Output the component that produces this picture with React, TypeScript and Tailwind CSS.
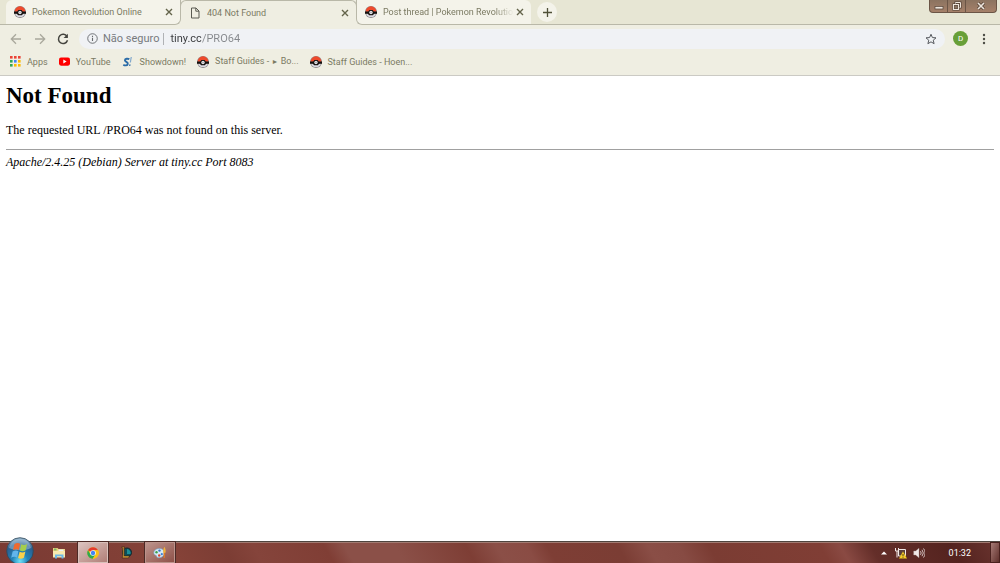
import React from "react"
import clsx from "clsx"

type IconProps = { className?: string }

const Pokeball = ({ className }: IconProps) => (
  <svg viewBox="0 0 24 24" className={clsx("shrink-0", className)}>
    <circle cx="12" cy="12" r="12" fill="#8f8b8e" />
    <path d="M1.200 11.500a10.800 10.800 0 0 1 21.600 0z" fill="#ee4a2c" />
    <path d="M2 15a10.300 9.500 0 0 0 20 0z" fill="#dcdbe2" />
    <path d="M0 10.800h6.500L9 8h6l2.500 2.800H24v4.700h-5.500l-3 3h-7l-3-3H0z" fill="#15110f" />
    <circle cx="12" cy="13" r="3.400" fill="#e6e6ea" />
    <circle cx="12" cy="13" r="1.500" fill="#a3a3aa" />
  </svg>
)

const PageIcon = ({ className }: IconProps) => (
  <svg viewBox="0 0 12 12" fill="none" stroke="#5a5a52" className={clsx("shrink-0", className)}>
    <path d="M2.500 1h4.500l3 3v7H2.500zM6.800 1v3.200H10" />
  </svg>
)

const CloseIcon = () => (
  <svg viewBox="0 0 8 8" className="h-2 w-2" stroke="#63634a" strokeWidth="1.400">
    <path d="m1 1 6 6M7 1 1 7" />
  </svg>
)

const AppsIcon = () => (
  <svg viewBox="0 0 11 11" className="h-[11px] w-[11px] shrink-0">
    {[
      ["#ea4335", "#ea4335", "#ea4335"],
      ["#34a853", "#4285f4", "#fbbc04"],
      ["#34a853", "#fbbc04", "#fbbc04"],
    ].map((row, y) =>
      row.map((fill, x) => (
        <rect key={`${x}-${y}`} x={x * 4} y={y * 4} width="2.600" height="2.600" fill={fill} />
      ))
    )}
  </svg>
)

const YouTubeIcon = () => (
  <svg viewBox="0 0 12 9" className="h-[9px] w-[11px] shrink-0">
    <rect width="12" height="9" rx="2.200" fill="#f00" />
    <path d="m4.700 2.400 3.600 2.100-3.600 2.100z" fill="#fff" />
  </svg>
)

const ShowdownIcon = () => (
  <svg viewBox="0 0 12 12" className="h-3 w-3 shrink-0" fill="none">
    <path d="M7.300 3.300C6 2.300 3 2.500 2.900 4.300c0 1.700 3.200 1.500 2.900 3.500C5.500 9.700 3 9.800 1.300 8.700" stroke="#2b6ca8" strokeWidth="1.900" />
    <path d="M9.300 1 8.300 6.500" stroke="#7fa6cc" strokeWidth="1.200" />
    <path d="m8 8.300-.3 1.700" stroke="#2b6ca8" strokeWidth="1.200" />
  </svg>
)

const WindowsOrb = () => (
  <svg viewBox="0 0 28 28" className="h-7 w-7">
    <defs>
      <radialGradient id="orb" cx="50%" cy="88%" r="85%">
        <stop offset="0" stopColor="#6fe0f6" />
        <stop offset=".35" stopColor="#2283b8" />
        <stop offset=".75" stopColor="#2b5e8f" />
        <stop offset="1" stopColor="#8fb0c9" />
      </radialGradient>
    </defs>
    <circle cx="14" cy="14" r="13.300" fill="url(#orb)" stroke="#2e4759" strokeWidth=".8" />
    <path d="M3 11C5 4 9 2 14 2s9 2 11 9c-6 3-15 3-22 0z" fill="#b9d3e2" opacity=".45" />
    <path d="M8.500 7c2-1.300 4-1.300 5.700-.3L12.800 13c-1.700-1-3.900-1-5.900.2z" fill="#f06a30" />
    <path d="M15.200 7.200c1.700.9 3.900 1 6-.2l-1.500 6.300c-1.900 1.200-4 1.200-5.800.2z" fill="#a5ce4c" />
    <path d="M6.600 14.400c2-1.200 4.100-1.200 5.800-.2L11 20.500c-1.700-1-3.800-1-5.800.2z" fill="#62b5ec" />
    <path d="M13.600 14.700c1.800 1 3.900 1 5.800-.1l-1.500 6.200c-1.900 1.200-4 1.200-5.800.2z" fill="#fbd04a" />
  </svg>
)

const FolderIcon = () => (
  <svg viewBox="0 0 14 12" className="h-3 w-3.5">
    <path d="M1 1h4.500l1 1H13v8H1z" fill="#ecd27c" />
    <path d="M2 1.500h2.500v2H2z" fill="#7fb96a" />
    <path d="M6.500 2.500h5v2h-5z" fill="#e9f3f8" />
    <path d="M1 4h12v6.500H1z" fill="#f8eab0" />
    <path d="M3 11.500V7.500h8.500v4h-2V9.200H5v2.300z" fill="#6db9e6" />
  </svg>
)

const ChromeIcon = () => (
  <svg viewBox="0 0 24 24" className="h-3 w-3">
    <circle cx="12" cy="12" r="11.500" fill="#fbc116" />
    <path d="M12 12 2 6.300A11.500 11.500 0 0 1 22 6.300H12z" fill="#e33b2e" />
    <path d="M2 6.300A11.500 11.500 0 0 0 11.500 23.500L17 14.900 12 12 7 14.900z" fill="#2da94f" />
    <path d="M12 6.300h10a11.500 11.500 0 0 1-10.500 17.200l5.500-8.600z" fill="#fbc116" />
    <circle cx="12" cy="12" r="5.600" fill="#fff" />
    <circle cx="12" cy="12" r="4.400" fill="#4285f4" />
  </svg>
)

const LeagueIcon = () => (
  <svg viewBox="0 0 12 13" className="h-[13px] w-3">
    <circle cx="7" cy="6.500" r="4.500" fill="#0e4f58" stroke="#12262c" />
    <path d="M7 3a4 4 0 0 1 3.500 5H7z" fill="#1c8f98" />
    <path d="M1.500 1h3.300l-.6 1.200v7.700h5.300l-1 2H2l.7-1.200V2.200z" fill="#d79d3c" stroke="#33220f" strokeWidth=".6" />
  </svg>
)

const PaintIcon = () => (
  <svg viewBox="0 0 14 13" className="h-[13px] w-3.5">
    <path d="M6 2.500C2.800 2.600.6 4.700.8 7.300c.2 2 2 1.600 2.600 2.400.7 1-.1 2 2.400 2 3.200 0 5.700-2.100 5.600-5C11.300 4 9 2.400 6 2.500z" fill="#d7e9f5" stroke="#6f9dc4" strokeWidth=".6" />
    <circle cx="3.500" cy="6.300" r="1.200" fill="#3fa34a" />
    <circle cx="6.500" cy="4.600" r="1.200" fill="#3671c8" />
    <circle cx="6.200" cy="9.500" r="1.200" fill="#d94432" />
    <circle cx="8.800" cy="8.200" r="1.100" fill="#3c82d4" />
    <path d="M10.500 6.500h1.600L11.900 12h-1.200z" fill="#e07b25" />
    <path d="M10.200 6.700C9.800 4 10.700 2.300 11.500.7c.8 1.600 1.500 3.500 1 6z" fill="#f0b33e" />
  </svg>
)

type Tab = {
  title: string
  icon: React.ReactNode
  wrap?: string
  shape: string
  fade?: boolean
}

const tabs: Tab[] = [
  {
    title: "Pokemon Revolution Online",
    icon: <Pokeball className="h-3 w-3" />,
    wrap: "bg-linear-to-r from-[#e7e6d4] from-50% to-[#efeee2] to-50%",
    shape: "rounded-tl-md rounded-br-md border-b border-r border-[#b9b8a8] bg-[#f4f3ea]",
  },
  {
    title: "404 Not Found",
    icon: <PageIcon className="h-3 w-3" />,
    shape: "bg-[#efeee2]",
  },
  {
    title: "Post thread | Pokemon Revolutio",
    icon: <Pokeball className="h-3 w-3" />,
    wrap: "bg-linear-to-r from-[#efeee2] from-50% to-[#e7e6d4] to-50%",
    shape: "rounded-tr-md rounded-bl-md border-b border-l border-[#b9b8a8] bg-[#f4f3ea]",
    fade: true,
  },
]

const TabStrip = () => (
  <div className="flex h-[25px] items-stretch bg-[#e7e6d4]">
    <div className="w-1.5 border-b border-[#b9b8a8]" />
    {tabs.map((tab, index) => (
      <div key={tab.title} className={clsx("relative w-[175px]", tab.wrap)}>
        <div className={clsx("flex h-full items-center pl-2 pr-[7px]", tab.shape)}>
          {index === 1 && (
            <span className="pointer-events-none absolute -left-px -right-px top-0 h-3 rounded-t-md border-x border-t border-[#b9b8a8]" />
          )}
          <button type="button" className="flex min-w-0 flex-1 items-center gap-1.5 text-left">
            {tab.icon}
            <span
              className={clsx(
                "flex-1 overflow-hidden whitespace-nowrap",
                tab.fade && "mask-r-from-85%"
              )}
            >
              {tab.title}
            </span>
          </button>
          <button type="button" aria-label="Fechar" className="ml-0.5 shrink-0">
            <CloseIcon />
          </button>
        </div>
      </div>
    ))}
    <div className="flex flex-1 items-start justify-between border-b border-[#b9b8a8] pl-1.5 pr-[3px]">
      <button
        type="button"
        aria-label="Nova guia"
        className="mt-0.5 flex h-5 w-5 items-center justify-center rounded-full bg-[#f4f3ea]"
      >
        <svg viewBox="0 0 9 9" className="h-[9px] w-[9px]" stroke="#4f5038" strokeWidth="1.300">
          <path d="M4.500 0v9M0 4.500h9" />
        </svg>
      </button>
      <div className="flex h-[13px] divide-x divide-[#6b5546] overflow-hidden rounded-b-sm border border-t-0 border-[#6b5546] bg-linear-to-b from-[#8b7360] to-[#a58069]">
        <button type="button" aria-label="Minimizar" className="flex w-[18px] items-center justify-center">
          <svg viewBox="0 0 10 10" className="h-2.5 w-2.5">
            <rect x="1" y="5.500" width="8" height="2.500" fill="#eee5dc" stroke="#554539" strokeWidth=".7" />
          </svg>
        </button>
        <button type="button" aria-label="Restaurar" className="flex w-[18px] items-center justify-center">
          <svg viewBox="0 0 10 10" className="h-2.5 w-2.5" fill="none">
            <path d="M3.500 1.500h5v5h-5z" stroke="#4d3d32" strokeWidth="2" />
            <path d="M3.500 1.500h5v5h-5z" stroke="#eee5dc" />
            <path d="M1.500 3.500h5v5h-5z" fill="#8b7360" stroke="#4d3d32" strokeWidth="2.200" />
            <path d="M1.500 3.500h5v5h-5z" stroke="#eee5dc" strokeWidth="1.200" />
          </svg>
        </button>
        <button type="button" aria-label="Fechar janela" className="flex w-[30px] items-center justify-center">
          <svg viewBox="0 0 10 10" className="h-2.5 w-2.5">
            <path d="m2 2 6 6M8 2 2 8" stroke="#4d3d32" strokeWidth="3" />
            <path d="m2 2 6 6M8 2 2 8" stroke="#eee5dc" strokeWidth="1.700" />
          </svg>
        </button>
      </div>
    </div>
  </div>
)

const Toolbar = () => (
  <div className="flex h-[27px] items-center pl-2.5 pr-2.5">
    <button type="button" aria-label="Voltar" className="mr-3">
      <svg viewBox="0 0 12 12" className="h-3 w-3" fill="none" stroke="#a9a89c" strokeWidth="1.300">
        <path d="M11 6H1.500M6 1.300 1.300 6 6 10.700" />
      </svg>
    </button>
    <button type="button" aria-label="Avançar" className="mr-[11px]">
      <svg viewBox="0 0 12 12" className="h-3 w-3" fill="none" stroke="#a9a89c" strokeWidth="1.300">
        <path d="M1 6h9.500M6 1.300 10.700 6 6 10.700" />
      </svg>
    </button>
    <button type="button" aria-label="Recarregar" className="mr-2.5">
      <svg viewBox="0 0 12 12" className="h-3 w-3" fill="none" stroke="#45453f" strokeWidth="1.500">
        <path d="M10 3.500A4.600 4.600 0 1 0 10.500 7.200" />
        <path d="M10.900.8v4.300H6.600z" fill="#45453f" stroke="none" />
      </svg>
    </button>
    <div className="flex h-5 flex-1 items-center rounded-full bg-[#f0f2f5] pl-2 pr-2 text-[11px] leading-4">
      <svg viewBox="0 0 12 12" className="mr-[5px] h-[11px] w-[11px]" fill="none" stroke="#66696d">
        <circle cx="6" cy="6" r="5.200" />
        <path d="M6 5.300v3.500M6 3v1.300" strokeWidth="1.200" />
      </svg>
      <span className="text-[#777a7e]">Não seguro</span>
      <span className="ml-1 mr-1.5 h-3 w-px bg-[#b0b2b5]" />
      <input
        aria-label="Endereço"
        defaultValue="tiny.cc/PRO64"
        className="min-w-0 flex-1 bg-linear-[90deg,#36383b_31px,#85888c_31px] bg-clip-text text-transparent outline-0"
      />
      <button type="button" aria-label="Favoritar">
        <svg viewBox="0 0 24 24" className="h-3 w-3" fill="none" stroke="#56595e" strokeWidth="2">
          <path d="m12 2.500 2.800 6.600 7.200.6-5.500 4.700 1.700 7-6.200-3.700-6.200 3.700 1.700-7L2 9.700l7.200-.6z" />
        </svg>
      </button>
    </div>
    <button
      type="button"
      className="ml-2 flex h-[15px] w-[15px] items-center justify-center rounded-full bg-[#689f38] text-[8px] text-white"
    >
      D
    </button>
    <button type="button" aria-label="Menu" className="ml-2.5">
      <svg viewBox="0 0 12 12" className="h-3 w-3" fill="#4c4c44">
        <circle cx="6" cy="2" r="1.200" />
        <circle cx="6" cy="6" r="1.200" />
        <circle cx="6" cy="10" r="1.200" />
      </svg>
    </button>
  </div>
)

const bookmarks = [
  { id: "apps", label: "Apps", icon: <AppsIcon /> },
  { id: "youtube", label: "YouTube", icon: <YouTubeIcon /> },
  { id: "showdown", label: "Showdown!", icon: <ShowdownIcon /> },
  {
    id: "staff-bo",
    label: (
      <span>
        Staff Guides - <span className="text-[7px]">►</span> Bo...
      </span>
    ),
    icon: <Pokeball className="h-3 w-3" />,
  },
  { id: "staff-hoen", label: "Staff Guides - Hoen...", icon: <Pokeball className="h-3 w-3" /> },
]

const Bookmarks = () => (
  <nav className="flex h-6 items-center gap-[11px] border-b border-[#cbcac4] pb-1 pl-2.5">
    {bookmarks.map((bookmark) => (
      <a key={bookmark.id} href="#" className="flex items-center gap-1.5 whitespace-nowrap">
        {bookmark.icon}
        {bookmark.label}
      </a>
    ))}
  </nav>
)

const ErrorPage = () => (
  <main className="flex-1 px-1.5 pt-1.5 font-['Liberation_Serif',serif] text-[12px] leading-[14px] text-black">
    <h1 className="mb-[13px] text-[23px] font-bold leading-7">Not Found</h1>
    <p>The requested URL /PRO64 was not found on this server.</p>
    <hr className="mb-[5px] mt-3 border-[#a0a0a0]" />
    <address className="italic">Apache/2.4.25 (Debian) Server at tiny.cc Port 8083</address>
  </main>
)

const activeTask =
  "border border-[#d9c0ba] bg-linear-to-br from-[#dcc3bf] to-[#b07f78] outline outline-[#4c2a26]"

const Taskbar = () => (
  <footer className="flex h-[22px] items-stretch border-t border-[#4f453f] bg-linear-[60deg,#7a3a33_0%,#854238_18%,#7c3d34_23%,#85443b_26%,#803e35_33%,#8b5048_35%,#8b5048_40%,#7e3e35_47%,#8b4f47_50%,#8a4c44_53%,#7e3e35_55%,#7b3d34_62%,#8a4e46_65%,#874b43_68%,#7b3c33_71%,#803e35_82%,#8a4a43_84%,#642e29_87%,#54231f_95%,#6b3530_100%] shadow-[inset_0_1px_0_#a27b72]">
    <button type="button" aria-label="Iniciar" className="-mt-[5px] ml-1.5 h-7 w-7">
      <WindowsOrb />
    </button>
    <button type="button" aria-label="Explorer" className="ml-[9px] flex w-8 items-center justify-center">
      <FolderIcon />
    </button>
    <button
      type="button"
      aria-label="Chrome"
      className={clsx("ml-[3px] flex w-[30px] items-center justify-center", activeTask)}
    >
      <ChromeIcon />
    </button>
    <button type="button" aria-label="League of Legends" className="ml-0.5 flex w-8 items-center justify-center">
      <LeagueIcon />
    </button>
    <button
      type="button"
      aria-label="Paint"
      className="ml-[3px] flex w-[30px] items-center justify-center border border-[#bb938b] bg-linear-to-br from-[#bd948d] to-[#8e5149] outline outline-[#4c2a26]"
    >
      <PaintIcon />
    </button>
    <div className="ml-auto flex items-center">
      <button type="button" aria-label="Mostrar ícones ocultos" className="mr-2">
        <svg viewBox="0 0 6 4" className="h-1 w-1.5" fill="#fff">
          <path d="m3 .5 3 3H0z" />
        </svg>
      </button>
      <svg viewBox="0 0 12 12" className="mr-1.5 h-3 w-3" fill="none">
        <path d="M.5 1v3h3V1M2 4v6.500" stroke="#f1e9e7" />
        <path d="M3.500 2.500h7v6.500h-7z" fill="#59403d" stroke="#f1e9e7" />
        <path d="m8 4.500 4 7H4z" fill="#f7cf2c" stroke="#9a7414" strokeWidth=".3" />
        <path d="M8 7v2.300m0 .6v.8" stroke="#3c2c0c" strokeWidth=".9" />
      </svg>
      <svg viewBox="0 0 12 12" className="h-3 w-3" fill="none" stroke="#f1e9e7">
        <path d="M.7 4h2L6 1.200v9.600L2.700 8h-2z" fill="#f1e9e7" stroke="#a79995" strokeWidth=".4" />
        <path d="M7.500 4.200a3 3 0 0 1 0 3.600M9 2.800a5 5 0 0 1 0 6.400M10.500 1.500a7 7 0 0 1 0 9" strokeWidth=".8" />
      </svg>
      <time className="ml-6 mr-[19px] text-white">01:32</time>
      <button
        type="button"
        aria-label="Mostrar área de trabalho"
        className="h-full w-2.5 border border-[#4a211e] bg-linear-to-br from-[#a77b76] to-[#5f302c]"
      />
    </div>
  </footer>
)

export default function App() {
  return (
    <div className="flex min-h-screen flex-col overflow-hidden bg-white font-[Roboto,sans-serif] text-[9px] leading-3 text-[#7b7a62]">
      <header className="bg-[#efeee2]">
        <TabStrip />
        <Toolbar />
        <Bookmarks />
      </header>
      <ErrorPage />
      <Taskbar />
    </div>
  )
}
